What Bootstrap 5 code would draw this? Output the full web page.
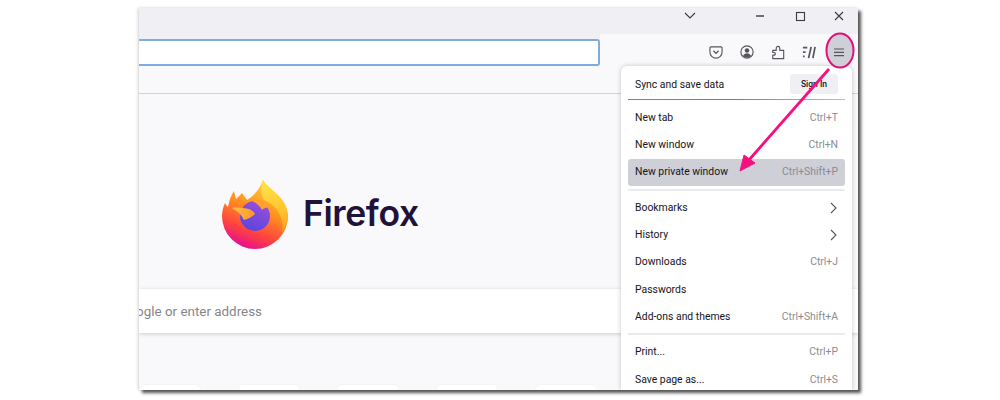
<!DOCTYPE html>
<html lang="en">
<head>
    <meta charset="UTF-8">
    <meta name="viewport" content="width=device-width, initial-scale=1.0">
    <title>Firefox menu</title>
    <link href="https://cdn.jsdelivr.net/npm/bootstrap@5.3.0/dist/css/bootstrap.min.css" rel="stylesheet">
    <style>
        body { background: #fff; overflow: hidden; font-family: Roboto, "Noto Sans", sans-serif; }
        .stage { position: relative; width: 1000px; height: 400px; padding: 8px 0 0 139px; }
        .ff-window { position: relative; width: 719px; height: 382px; background: #f9f9fb; overflow: hidden; box-shadow: 3px 3px 3px #555, -1px 0 3px rgba(0,0,0,.18); }
        .title-strip { height: 26px; background: #f0f0f4; }
        .nav-strip { height: 32px; }
        .url-wrap { width: 461px; background: #f0f0f4; padding-top: 5px; }
        .url-field { height: 27px; background: #fff; border: 2px solid #80abdf; border-left: 0; border-radius: 0 3px 3px 0; }
        .tool-icons { position: absolute; top: 28px; left: 561px; }
        .tool-slot { width: 31px; height: 32px; display: flex; align-items: center; justify-content: center; }
        .bookmark-strip { height: 27px; border-bottom: 1px solid #d2d2d6; box-sizing: content-box; }
        .home-pane { height: 297px; }
        .logo-row { padding: 84px 0 0 83px; gap: 14px; height: 156px; margin-bottom: 39px; }
        .logo-word { font-family: Inter, "Liberation Sans", sans-serif; font-weight: 600; font-size: 35.500px; letter-spacing: -.4px; color: #20123a; line-height: 1; }
        .search-bar { height: 44px; background: #fff; box-shadow: 0 1px 4px rgba(0,0,0,.18); padding-top: 2px; }
        .search-clip { width: 123px; overflow: hidden; justify-content: flex-end; white-space: nowrap; font-size: 13.400px; color: #85858c; flex-shrink: 0; }
        .tile-row { position: absolute; left: 1px; bottom: 0; gap: 39px; }
        .tile-top { width: 60px; height: 5px; background: #fff; border-radius: 4px 4px 0 0; box-shadow: 0 0 2px rgba(0,0,0,.08); }
        .app-menu { position: absolute; top: 58px; left: 482px; width: 231px; height: 324px; background: #fff; border-radius: 6px 6px 0 0; box-shadow: 0 0 5px rgba(0,0,0,.22); padding: 0 7px; font-size: 10.400px; color: #15141a; }
        .menu-head { height: 33px; padding: 8px 7px 0 7px; }
        .signin-btn { width: 48px; height: 20px; background: #f0f0f4; border-radius: 3px; font-size: 8.500px; font-weight: 500; }
        .rainbow-line { height: 1px; background: linear-gradient(90deg, #a860d0, #f0409a 50%, #f8b850); }
        .menu-row { height: 27.300px; padding: 0 7px; border-radius: 3px; }
        .menu-row.is-hot { background: #cfcfd8; }
        .menu-gap { height: 2px; background: #ebebef; margin: 3px 0; }
        .key-hint { color: #8b8b92; }
        .sync-label { padding-top: 3px; }
        .arrow-layer { position: absolute; left: 0; top: 0; pointer-events: none; }
    </style>
</head>
<body>
    <div class="stage">
        <div class="ff-window">
            <div class="title-strip"></div>
            <!-- window buttons -->
            <svg class="position-absolute top-0 start-0" width="719" height="26" fill="none" stroke="#3a3a40" stroke-width="1.100">
                <path d="M546 5l5 5 5-5"/>
                <path d="M617 8h8" stroke-width="1.400"/>
                <rect x="657.500" y="4.500" width="8" height="8"/>
                <path d="M696 4l8 8M704 4l-8 8"/>
            </svg>
            <div class="nav-strip d-flex">
                <div class="url-wrap"><div class="url-field"></div></div>
            </div>
            <div class="tool-icons d-flex">
                <div class="tool-slot">
                    <svg width="14" height="13" viewBox="0 0 16 15" fill="none" stroke="#55555c" stroke-width="1.300"><path d="M2.200 1h11.600a1.200 1.200 0 0 1 1.200 1.200v4.800a7 7 0 0 1-14 0V2.200A1.200 1.200 0 0 1 2.200 1z"/><path d="M5 5.500l3 3 3-3" stroke-width="1.500"/></svg>
                </div>
                <div class="tool-slot">
                    <svg width="14" height="14" viewBox="0 0 16 16" fill="none" stroke="#55555c" stroke-width="1.300"><circle cx="8" cy="8" r="7"/><circle cx="8" cy="6.300" r="2.600" fill="#55555c" stroke="none"/><path d="M3.400 12.600c1-2.300 2.700-3.200 4.600-3.200s3.600.9 4.600 3.200c-1.200 1.100-2.800 1.700-4.600 1.700s-3.400-.6-4.600-1.700z" fill="#55555c" stroke="none"/></svg>
                </div>
                <div class="tool-slot">
                    <svg width="14" height="15" viewBox="0 0 16 16" fill="none" stroke="#55555c" stroke-width="1.300" stroke-linejoin="round"><path d="M2 15v-4h1.500a1.500 1.500 0 0 0 0-3H2V5.500h4V3a2 2 0 0 1 4 0v2.500h4.500V15z"/></svg>
                </div>
                <div class="tool-slot">
                    <svg width="14" height="13" viewBox="0 0 16 15" fill="none" stroke="#55555c" stroke-width="2"><path d="M1 2h5M1 7h3M1 12h2M7.500 14l3-13M12.500 14l2.500-13"/></svg>
                </div>
            </div>
            <div class="bookmark-strip"></div>
            <div class="home-pane">
                <div class="logo-row d-flex align-items-center">
                    <svg width="67" height="71" viewBox="0 0 67 71">
                        <defs>
                            <linearGradient id="bodyFill" x1=".8" y1="0" x2=".4" y2="1">
                                <stop offset="0" stop-color="#ffe040"/>
                                <stop offset=".45" stop-color="#ff9020"/>
                                <stop offset=".78" stop-color="#ff4040"/>
                                <stop offset="1" stop-color="#e6108f"/>
                            </linearGradient>
                            <linearGradient id="flameFill" x1=".4" y1="0" x2=".6" y2="1">
                                <stop offset="0" stop-color="#ffe24a"/>
                                <stop offset=".7" stop-color="#ffc02a"/>
                                <stop offset="1" stop-color="#ff9a24"/>
                            </linearGradient>
                            <linearGradient id="tailFill" x1="0" y1="0" x2="1" y2="0">
                                <stop offset="0" stop-color="#ffbe4a"/>
                                <stop offset="1" stop-color="#ff9a24"/>
                            </linearGradient>
                            <linearGradient id="globeFill" x1=".7" y1="0" x2=".3" y2="1">
                                <stop offset="0" stop-color="#9a4fd6"/>
                                <stop offset="1" stop-color="#5a45e0"/>
                            </linearGradient>
                        </defs>
                        <path d="M12 12L14 20L20 14L25 21C30 18 37 12 41 1C46 10 60 16 64 28C66 33 66 37 66 37A33 33 0 0 1 0 37C0 33 1 28 3 24C4 26 5 27 6 28C7 22 9 16 12 12Z" fill="url(#bodyFill)"/>
                        <path d="M41 1C46 10 60 16 64 28C67 38 66 46 60 54C62 40 57 28 44 22C39 20 38 10 41 1Z" fill="url(#flameFill)"/>
                        <circle cx="33" cy="37" r="15" fill="url(#globeFill)"/>
                        <path d="M30 22c7-2 15 1 19 7-4-1-7 0-9 2-2-4-6-7-10-9z" fill="#ffa030"/>
                        <path d="M10 29c6-1 12 0 17 1 3 1 5 3 6 5-3 3-7 5-11 6-2-5-7-9-12-12z" fill="url(#tailFill)"/>
                    </svg>
                    <div class="logo-word">Firefox</div>
                </div>
                <div class="search-bar d-flex align-items-center">
                    <div class="search-clip d-flex"><span>Search with Google or enter address</span></div>
                </div>
                <div class="tile-row d-flex">
                    <div class="tile-top"></div>
                    <div class="tile-top"></div>
                    <div class="tile-top"></div>
                    <div class="tile-top"></div>
                    <div class="tile-top"></div>
                </div>
            </div>
            <div class="app-menu">
                <div class="menu-head d-flex justify-content-between">
                    <span class="sync-label">Sync and save data</span>
                    <div class="signin-btn d-flex align-items-center justify-content-center">Sign In</div>
                </div>
                <div class="rainbow-line mb-1"></div>
                <div class="menu-row d-flex align-items-center justify-content-between"><span>New tab</span><span class="key-hint">Ctrl+T</span></div>
                <div class="menu-row d-flex align-items-center justify-content-between"><span>New window</span><span class="key-hint">Ctrl+N</span></div>
                <div class="menu-row is-hot d-flex align-items-center justify-content-between"><span>New private window</span><span class="key-hint">Ctrl+Shift+P</span></div>
                <div class="menu-gap"></div>
                <div class="menu-row d-flex align-items-center justify-content-between"><span>Bookmarks</span><svg width="8" height="12" fill="none" stroke="#55555c" stroke-width="1.100"><path d="M1 1l5 5-5 5"/></svg></div>
                <div class="menu-row d-flex align-items-center justify-content-between"><span>History</span><svg width="8" height="12" fill="none" stroke="#55555c" stroke-width="1.100"><path d="M1 1l5 5-5 5"/></svg></div>
                <div class="menu-row d-flex align-items-center justify-content-between"><span>Downloads</span><span class="key-hint">Ctrl+J</span></div>
                <div class="menu-row d-flex align-items-center justify-content-between"><span>Passwords</span></div>
                <div class="menu-row d-flex align-items-center justify-content-between"><span>Add-ons and themes</span><span class="key-hint">Ctrl+Shift+A</span></div>
                <div class="menu-gap"></div>
                <div class="menu-row d-flex align-items-center justify-content-between"><span>Print...</span><span class="key-hint">Ctrl+P</span></div>
                <div class="menu-row d-flex align-items-center justify-content-between"><span>Save page as...</span><span class="key-hint">Ctrl+S</span></div>
            </div>
        </div>
        <!-- hamburger highlight and arrow, on top of the screenshot -->
        <svg class="arrow-layer" width="1000" height="400">
            <ellipse cx="840" cy="50.500" rx="13.500" ry="17" fill="#cfcfd8" stroke="#e0107a" stroke-width="2"/>
            <path d="M834 49h10M834 52.300h10M834 55.600h10" stroke="#55555c" stroke-width="1.200"/>
            <path d="M829 69L749 160" stroke="#f5107f" stroke-width="2.800"/>
            <path d="M740 171l4-16 11 8z" fill="#f5107f" stroke="#f5107f" stroke-linejoin="round"/>
        </svg>
    </div>

    <script src="https://cdn.jsdelivr.net/npm/bootstrap@5.3.0/dist/js/bootstrap.bundle.min.js"></script>
</body>
</html>
